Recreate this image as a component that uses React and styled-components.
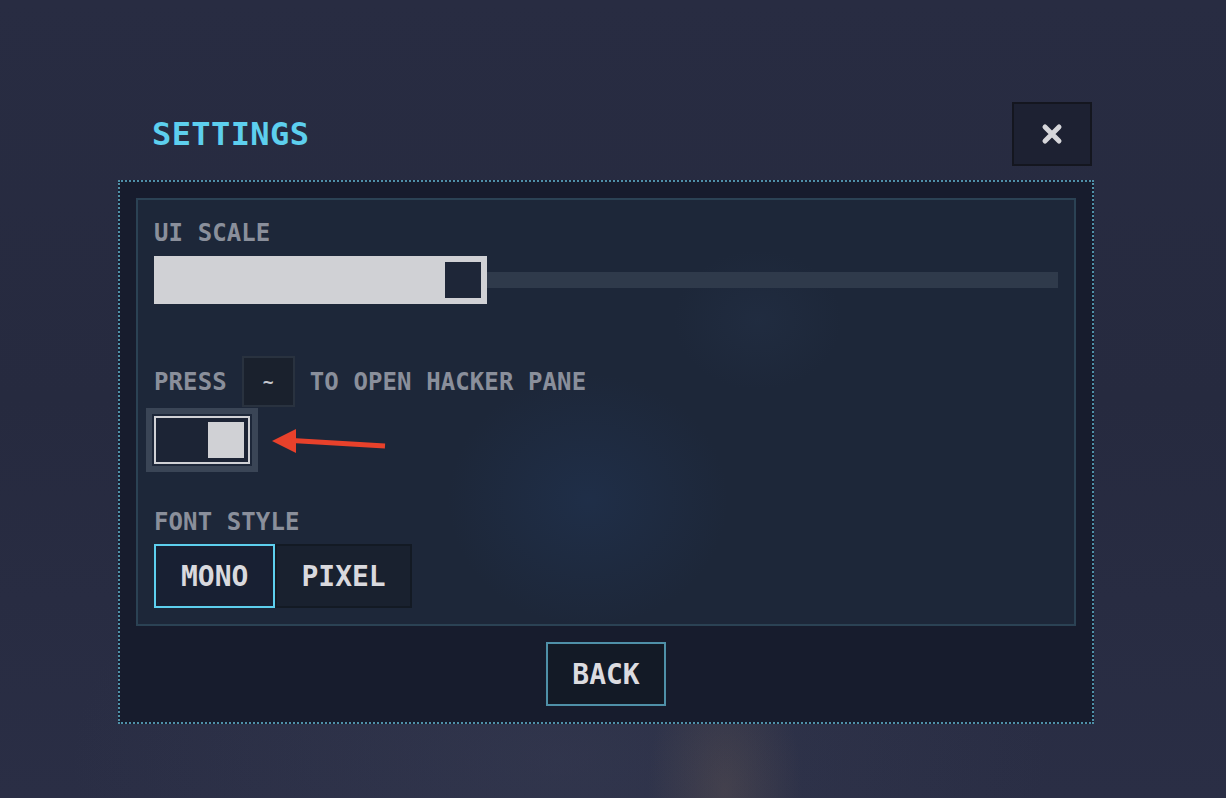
import styled, { createGlobalStyle } from "styled-components";

const Global = createGlobalStyle`
  html, body {
    margin: 0;
    padding: 0;
  }
  body {
    min-height: 100vh;
    font-family: "DejaVu Sans Mono", "Liberation Mono", monospace;
    background:
      radial-gradient(ellipse 110px 200px at 725px 790px, rgba(150, 120, 90, 0.2), transparent 70%),
      radial-gradient(ellipse 700px 400px at 560px 760px, rgba(70, 76, 100, 0.25), transparent 70%),
      linear-gradient(180deg, #282c42 0%, #262a3f 50%, #2a2e45 100%);
  }
`;

const Page = styled.div`
  min-height: 798px;
  box-sizing: border-box;
  padding: 102px 0 0 118px;
`;

const Column = styled.div`
  width: 976px;
  display: flex;
  flex-direction: column;
`;

const Header = styled.div`
  display: flex;
  align-items: center;
  justify-content: space-between;
  padding: 0 2px 0 34px;
  margin-bottom: 14px;
`;

const Title = styled.h1`
  margin: 0;
  font-size: 32px;
  letter-spacing: 0.4px;
  line-height: 36px;
  font-weight: 700;
  color: #5dcfee;
`;

const CloseButton = styled.button`
  width: 80px;
  height: 64px;
  display: flex;
  align-items: center;
  justify-content: center;
  background: #1d2132;
  border: 2px solid #14161f;
  padding: 0;
  cursor: pointer;
`;

const Frame = styled.div`
  border: 2px dotted #4f90a8;
  background: #171c2d;
  padding: 16px;
  display: flex;
  flex-direction: column;
  align-items: center;
  gap: 16px;
`;

const Card = styled.div`
  align-self: stretch;
  border: 2px solid #2b4254;
  background:
    radial-gradient(ellipse 200px 180px at 450px 300px, rgba(35, 60, 100, 0.35), transparent 70%),
    radial-gradient(ellipse 120px 100px at 620px 120px, rgba(40, 55, 80, 0.3), transparent 70%),
    #1d2739;
  padding: 21px 16px 16px;
  display: flex;
  flex-direction: column;
`;

const Label = styled.div`
  font-size: 24px;
  letter-spacing: 0.1px;
  line-height: 24px;
  font-weight: 700;
  color: #8a8f9b;
  margin-top: ${(p) => p.$top || 0}px;
`;

const Slider = styled.div`
  margin-top: 11px;
  height: 48px;
  display: flex;
  align-items: center;
`;

const SliderFill = styled.div`
  height: 48px;
  box-sizing: border-box;
  background: #d0d1d5;
  padding: 6px;
  display: flex;
  justify-content: flex-end;
  flex: none;
`;

const SliderThumb = styled.div`
  width: 36px;
  height: 36px;
  background: #1e2638;
`;

const SliderRest = styled.div`
  flex: 1;
  height: 16px;
  background: #2f3a4b;
`;

const HintRow = styled.div`
  margin-top: 52px;
  display: flex;
  align-items: center;
  gap: 15px;
  font-size: 24px;
  letter-spacing: 0.1px;
  line-height: 24px;
  font-weight: 700;
  color: #8a8f9b;
`;

const Key = styled.span`
  width: 53px;
  height: 51px;
  box-sizing: border-box;
  display: flex;
  align-items: center;
  justify-content: center;
  background: #1a212d;
  border: 2px solid #29323f;
  color: #c4c7ce;
  font-size: 18px;
`;

const ToggleWrap = styled.div`
  margin-top: 9px;
  display: flex;
  align-items: center;
  position: relative;
`;

const Toggle = styled.div`
  width: 96px;
  height: 48px;
  box-sizing: border-box;
  border: 2px solid #d0d1d5;
  background: #1c2435;
  outline: 6px solid #3a4556;
  outline-offset: 2px;
  padding: 4px;
  display: flex;
  justify-content: ${(p) => (p.$on ? "flex-end" : "flex-start")};
`;

const Knob = styled.div`
  width: 36px;
  height: 36px;
  background: #d0d1d5;
`;

const Arrow = styled.svg`
  position: absolute;
  left: 116px;
  top: 12px;
`;

const Segmented = styled.div`
  margin-top: 10px;
  display: flex;
`;

const SegButton = styled.button`
  height: 64px;
  box-sizing: border-box;
  padding: 0 ${(p) => (p.$active ? 25 : 24)}px;
  font-family: inherit;
  font-size: 28px;
  font-weight: 700;
  color: #d9d9de;
  background: ${(p) => (p.$active ? "#182033" : "#19212f")};
  border: 2px solid ${(p) => (p.$active ? "#5dcfee" : "#131a24")};
  cursor: pointer;
`;

const BackButton = styled.button`
  width: 120px;
  height: 64px;
  box-sizing: border-box;
  font-family: inherit;
  font-size: 28px;
  font-weight: 700;
  color: #dcdce0;
  background: #131a26;
  border: 2px solid #4f90a8;
  cursor: pointer;
`;

export default function App() {
  return (
    <>
      <Global />
      <Page>
        <Column>
          <Header>
            <Title>SETTINGS</Title>
            <CloseButton aria-label="Close">
              <svg width="22" height="22" viewBox="0 0 22 22">
                <path
                  d="M4 4 L18 18 M18 4 L4 18"
                  stroke="#d6d6da"
                  strokeWidth="5"
                  strokeLinecap="round"
                />
              </svg>
            </CloseButton>
          </Header>
          <Frame>
            <Card>
              <Label>UI SCALE</Label>
              <Slider>
                <SliderFill style={{ width: "36.8%" }}>
                  <SliderThumb />
                </SliderFill>
                <SliderRest />
              </Slider>
              <HintRow>
                <span>PRESS</span>
                <Key>~</Key>
                <span>TO OPEN HACKER PANE</span>
              </HintRow>
              <ToggleWrap>
                <Toggle $on>
                  <Knob />
                </Toggle>
                <Arrow width="120" height="30" viewBox="0 0 120 30">
                  <path d="M2 13 L26 1 L26 25 Z" fill="#e8412b" />
                  <path d="M22 12.5 L115 18" stroke="#e8412b" strokeWidth="5" />
                </Arrow>
              </ToggleWrap>
              <Label $top={46}>FONT STYLE</Label>
              <Segmented>
                <SegButton $active>MONO</SegButton>
                <SegButton>PIXEL</SegButton>
              </Segmented>
            </Card>
            <BackButton>BACK</BackButton>
          </Frame>
        </Column>
      </Page>
    </>
  );
}
